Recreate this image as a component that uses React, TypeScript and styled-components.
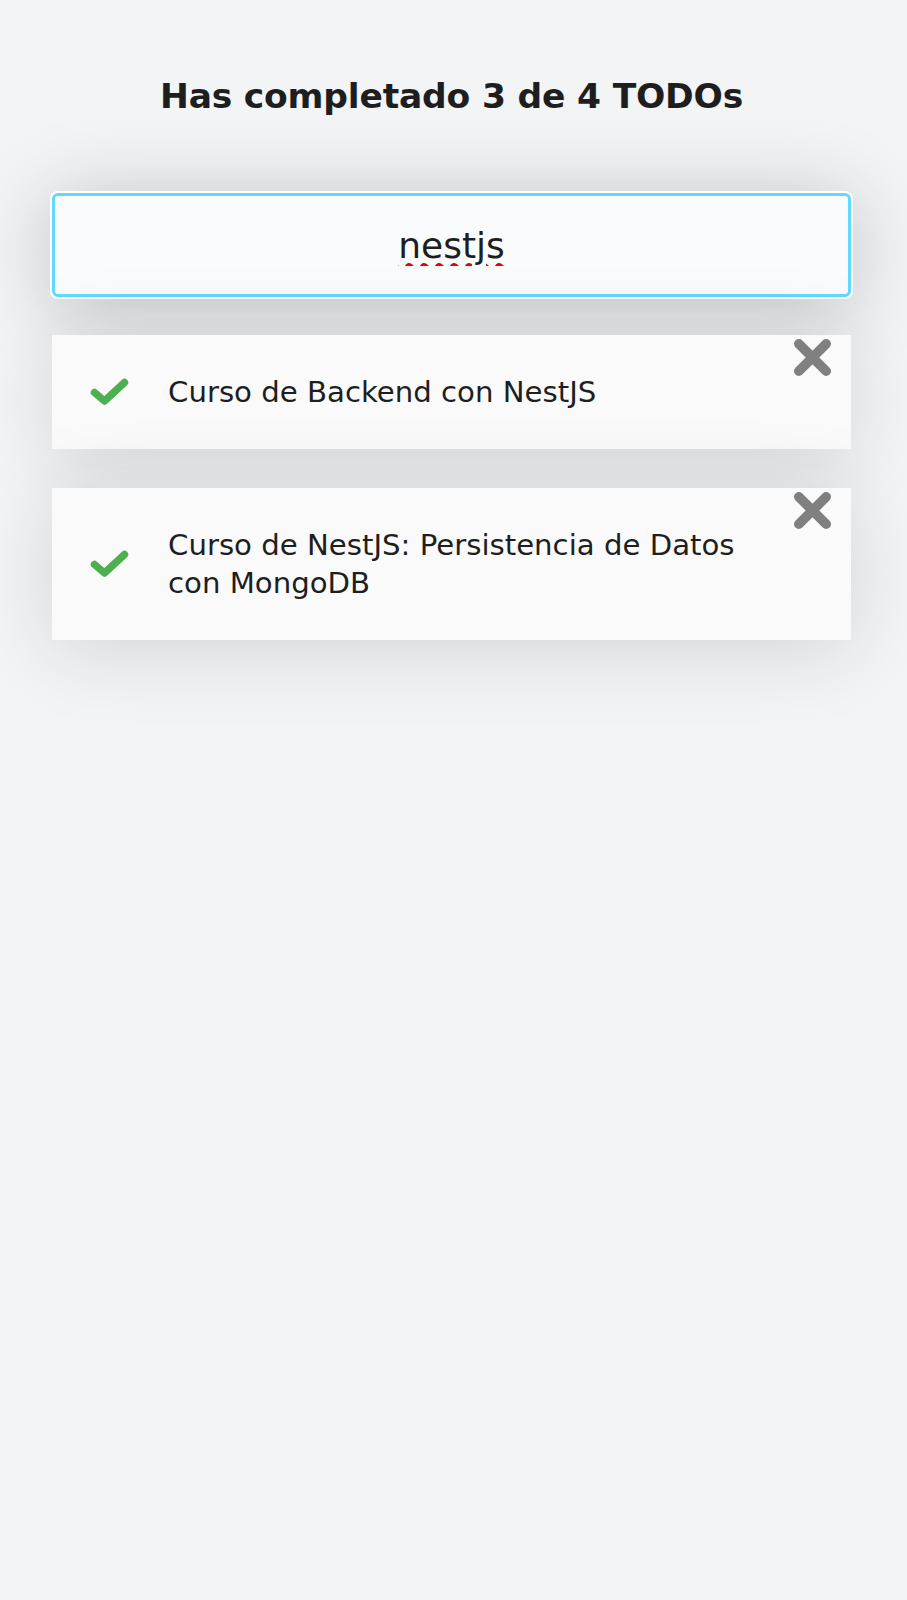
import { useState } from "react";
import styled, { createGlobalStyle } from "styled-components";

const GlobalStyle = createGlobalStyle`
    * {
        box-sizing: border-box;
    }
    body {
        margin: 0;
        background-color: #F2F4F5;
        color: #1E1E1F;
        font-family: "DejaVu Sans", "Noto Sans", sans-serif;
    }
`;

const Page = styled.main`
    min-height: 100vh;
    padding: 0 56px 40px 52px;
`;
const Counter = styled.h1`
    margin: 0;
    padding: 76px 0 77px;
    font-size: 34.5px;
    line-height: 40px;
    font-weight: 700;
    text-align: center;
    letter-spacing: -0.2px;
`;
const Search = styled.input`
    display: block;
    width: 100%;
    height: 104px;
    margin: 0;
    padding: 0 24px;
    background: #F9FBFC;
    border: 3px solid #61DAFB;
    border-radius: 6px;
    outline: none;
    box-shadow: 0 0 0 2px #ffffff, 0 8px 80px rgba(32, 35, 41, 0.25);
    font-family: inherit;
    font-size: 36px;
    font-weight: 400;
    color: #1E1E1F;
    text-align: center;
    text-decoration: underline wavy #F00000;
    text-decoration-thickness: 2.5px;
    text-underline-offset: 5px;
`;
const List = styled.ul`
    list-style: none;
    margin: 38px 0 0;
    padding: 0;
    display: flex;
    flex-direction: column;
    gap: 39px;
`;
const Item = styled.li`
    display: flex;
    align-items: center;
    padding: 0 19px 0 38px;
    background-color: #FAFAFA;
    box-shadow: 0 8px 80px rgba(32, 35, 41, 0.15);
`;
const CheckButton = styled.span<{ $done: boolean }>`
    display: flex;
    flex: none;
    width: 40px;
    height: 30px;
    color: ${p => (p.$done ? "#4CAF50" : "#808080")};
    cursor: pointer;
`;
const Text = styled.p`
    flex: none;
    width: 606px;
    margin: 38px 0 38px 38px;
    font-size: 29.2px;
    line-height: 38px;
    font-weight: 400;
`;
const DeleteButton = styled.span`
    display: flex;
    flex: none;
    align-self: flex-start;
    width: 39px;
    height: 39px;
    margin: 3px 0 0 19px;
    color: #808080;
    cursor: pointer;
`;

const CheckIcon = () => (
    <svg width="40" height="30" viewBox="0 0 40 30" fill="none">
        <path d="M4.5 15.5 L14.5 24 L34.5 5.5" stroke="currentColor" strokeWidth="7.5" strokeLinecap="round" strokeLinejoin="round" />
    </svg>
);
const DeleteIcon = () => (
    <svg width="39" height="39" viewBox="0 0 40 40" fill="none">
        <path d="M6 6 L34 34 M34 6 L6 34" stroke="currentColor" strokeWidth="10" strokeLinecap="round" />
    </svg>
);

type Todo = { text: string; completed: boolean };

const defaultTodos: Todo[] = [
    { text: "Curso de Backend con NestJS", completed: true },
    { text: "Curso de NestJS: Persistencia de Datos con MongoDB", completed: true },
    { text: "Curso de React.js", completed: true },
    { text: "Curso de Node.js", completed: false },
];

export default function App() {
    const [todos, setTodos] = useState<Todo[]>(defaultTodos);
    const [search, setSearch] = useState("nestjs");
    const completed = todos.filter(t => t.completed).length;
    const visible = todos.filter(t => t.text.toLowerCase().includes(search.toLowerCase()));

    const toggle = (text: string) =>
        setTodos(todos.map(t => (t.text === text ? { ...t, completed: !t.completed } : t)));
    const remove = (text: string) => setTodos(todos.filter(t => t.text !== text));

    return (
        <>
            <GlobalStyle />
            <Page>
                <Counter>Has completado {completed} de {todos.length} TODOs</Counter>
                <Search value={search} onChange={e => setSearch(e.target.value)} placeholder="Cebolla" />
                <List>
                    {visible.map(todo => (
                        <Item key={todo.text}>
                            <CheckButton $done={todo.completed} onClick={() => toggle(todo.text)}>
                                <CheckIcon />
                            </CheckButton>
                            <Text>{todo.text}</Text>
                            <DeleteButton onClick={() => remove(todo.text)}>
                                <DeleteIcon />
                            </DeleteButton>
                        </Item>
                    ))}
                </List>
            </Page>
        </>
    );
}
